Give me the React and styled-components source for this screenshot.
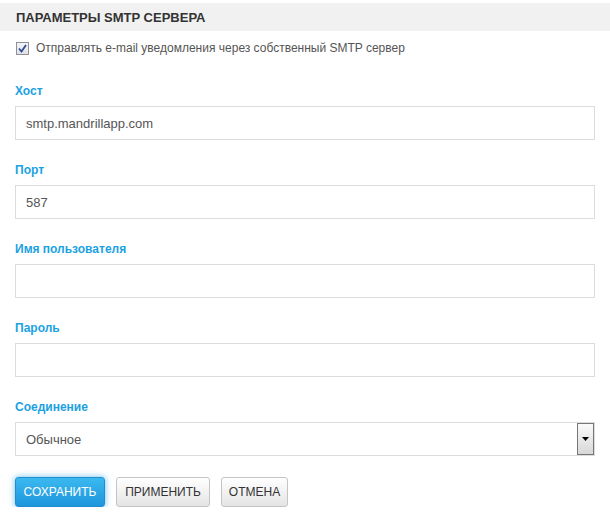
import React from "react";
import styled, { createGlobalStyle } from "styled-components";

const GlobalStyle = createGlobalStyle`
  body {
    margin: 0;
    background: #fff;
    font-family: "Liberation Sans", Arial, sans-serif;
  }
`;

const Page = styled.div`
  width: 610px;
  padding-top: 3px;
`;

const SectionHeader = styled.div`
  height: 28px;
  line-height: 29px;
  background: #f1f1f1;
  padding-left: 16px;
  font-size: 13px;
  font-weight: bold;
  color: #333;
`;

const Form = styled.div`
  padding: 9px 15px 0 15px;
  width: 580px;
`;

const CheckRow = styled.label`
  display: flex;
  align-items: center;
  gap: 7px;
  height: 16px;
  font-size: 12px;
  color: #555;
  margin-bottom: 27px;
  padding-left: 1px;
`;

const CheckBox = styled.span`
  width: 11px;
  height: 11px;
  border: 1px solid #8f8f9d;
  background: linear-gradient(#f4f4f4, #e2e2e2);
  display: flex;
  align-items: center;
  justify-content: center;
`;

const Field = styled.div`
  margin-bottom: ${({ $last }) => ($last ? "21px" : "22px")};
`;

const Label = styled.div`
  line-height: 16px;
  font-size: 12px;
  font-weight: bold;
  color: #1ba1e2;
  margin-bottom: 7px;
`;

const Input = styled.div`
  height: 32px;
  border: 1px solid #dcdcdc;
  box-sizing: content-box;
  padding: 0 10px;
  display: flex;
  align-items: center;
  font-size: 13px;
  color: #555;
  position: relative;
`;

const DropButton = styled.div`
  position: absolute;
  right: 0;
  top: 0;
  width: 15px;
  height: 30px;
  border: 1px solid #777;
  background: linear-gradient(#fafafa, #d8d8d8);
  display: flex;
  align-items: center;
  justify-content: center;
`;

const Buttons = styled.div`
  display: flex;
  gap: 11px;
`;

const Button = styled.button`
  height: 30px;
  width: ${({ $w }) => $w}px;
  padding: 0;
  border-radius: 3px;
  font-family: "Liberation Sans", Arial, sans-serif;
  font-size: 12px;
  text-transform: uppercase;
  cursor: pointer;
  border: 1px solid ${({ $primary }) => ($primary ? "#1f8fd0" : "#c4c4c4")};
  color: ${({ $primary }) => ($primary ? "#fff" : "#333")};
  background: ${({ $primary }) =>
    $primary
      ? "linear-gradient(#3bb9f0, #1f95dc)"
      : "linear-gradient(#ffffff, #e4e4e4)"};
  box-shadow: ${({ $primary }) =>
    $primary ? "0 0 6px rgba(40, 160, 230, 0.7)" : "none"};
`;

const fields = [
  { label: "Хост", value: "smtp.mandrillapp.com" },
  { label: "Порт", value: "587" },
  { label: "Имя пользователя", value: "" },
  { label: "Пароль", value: "" },
];

export default function App() {
  return (
    <Page>
      <GlobalStyle />
      <SectionHeader>ПАРАМЕТРЫ SMTP СЕРВЕРА</SectionHeader>
      <Form>
        <CheckRow>
          <CheckBox>
            <svg width="9" height="9" viewBox="0 0 9 9">
              <path d="M1 4.5 L3.5 7.5 L8 1" stroke="#2b4a9a" strokeWidth="1.8" fill="none" />
            </svg>
          </CheckBox>
          Отправлять e-mail уведомления через собственный SMTP сервер
        </CheckRow>
        {fields.map((f) => (
          <Field key={f.label}>
            <Label>{f.label}</Label>
            <Input>{f.value}</Input>
          </Field>
        ))}
        <Field $last>
          <Label>Соединение</Label>
          <Input>
            Обычное
            <DropButton>
              <svg width="7" height="4" viewBox="0 0 7 4">
                <path d="M0 0 H7 L3.5 4 Z" fill="#000" />
              </svg>
            </DropButton>
          </Input>
        </Field>
        <Buttons>
          <Button $primary $w={90}>Сохранить</Button>
          <Button $w={94}>Применить</Button>
          <Button $w={67}>Отмена</Button>
        </Buttons>
      </Form>
    </Page>
  );
}
